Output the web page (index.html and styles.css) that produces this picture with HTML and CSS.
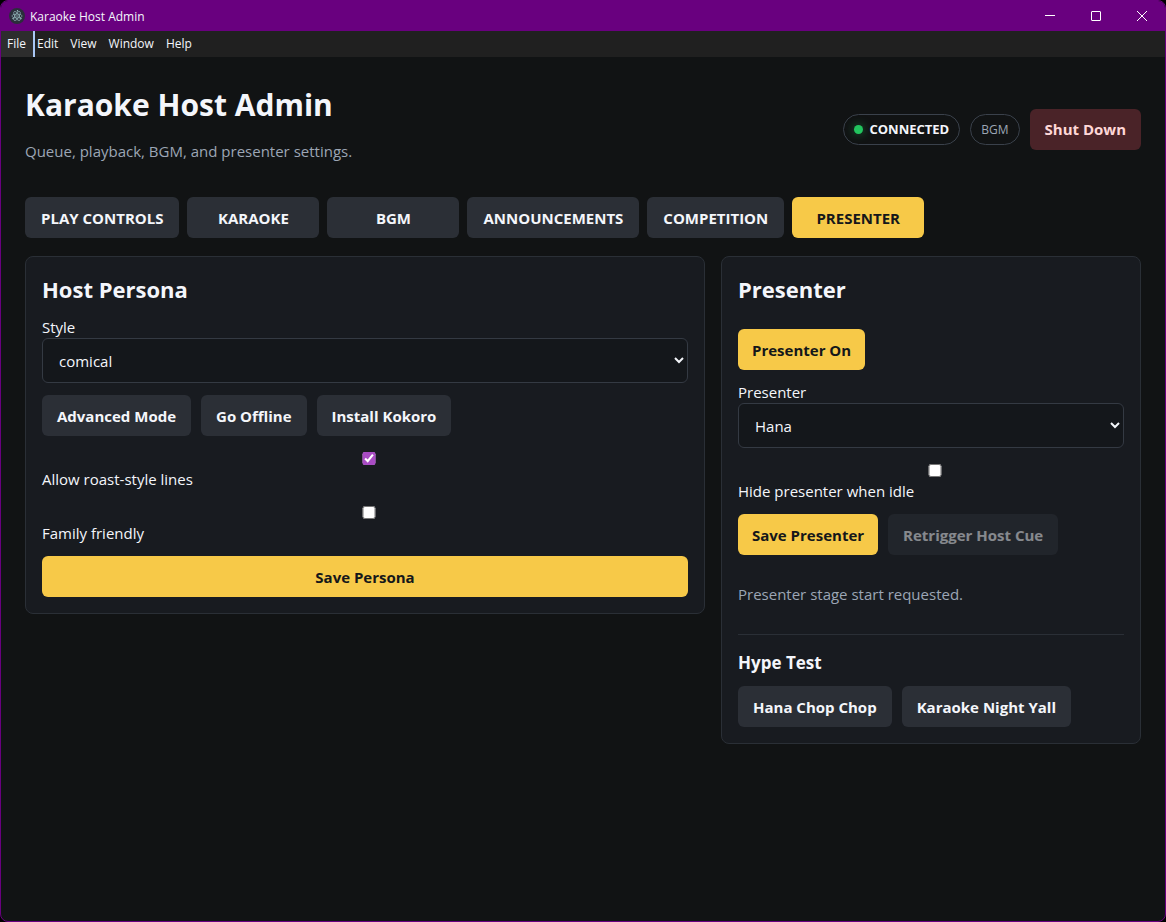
FILE: index.html
```html
<!DOCTYPE html>
<html lang="en">
<head>
    <meta charset="UTF-8">
    <meta name="viewport" content="width=device-width, initial-scale=1.0">
    <title>Karaoke Host Admin</title>
    <link rel="stylesheet" href="styles.css">
</head>
<body>
    <div class="window">
        <div class="titlebar">
            <svg class="app-icon" viewBox="0 0 16 16" width="16" height="16">
                <circle cx="8" cy="8" r="8" fill="#2b2e3b"/>
                <g fill="none" stroke="#9fc4c8" stroke-width="0.6">
                    <ellipse cx="8" cy="8" rx="5.2" ry="2"/>
                    <ellipse cx="8" cy="8" rx="5.2" ry="2" transform="rotate(60 8 8)"/>
                    <ellipse cx="8" cy="8" rx="5.2" ry="2" transform="rotate(120 8 8)"/>
                </g>
                <g fill="#9fc4c8">
                    <circle cx="8" cy="8" r="0.7"/>
                    <circle cx="4" cy="10.5" r="0.7"/>
                    <circle cx="12" cy="10.5" r="0.7"/>
                    <circle cx="8.5" cy="2.8" r="0.7"/>
                </g>
            </svg>
            <span class="app-title">Karaoke Host Admin</span>
            <div class="window-controls">
                <button class="window-button" aria-label="Minimize">
                    <svg viewBox="0 0 10 10" width="10" height="10"><path d="M0 4.5H10" stroke="#fff" fill="none"/></svg>
                </button>
                <button class="window-button" aria-label="Maximize">
                    <svg viewBox="0 0 10 10" width="10" height="10"><rect x="0.5" y="0.5" width="9" height="9" rx="0.5" stroke="#fff" fill="none"/></svg>
                </button>
                <button class="window-button" aria-label="Close">
                    <svg viewBox="0 0 10 10" width="10" height="10"><path d="M0 0L10 10M10 0L0 10" stroke="#fff" fill="none"/></svg>
                </button>
            </div>
        </div>

        <div class="menubar">
            <button class="menu-item active">File</button>
            <button class="menu-item">Edit</button>
            <button class="menu-item">View</button>
            <button class="menu-item">Window</button>
            <button class="menu-item">Help</button>
        </div>

        <main class="content">
            <header class="header">
                <div>
                    <h1>Karaoke Host Admin</h1>
                    <p class="subtitle">Queue, playback, BGM, and presenter settings.</p>
                </div>
                <div class="status">
                    <span class="pill connected"><span class="dot"></span>CONNECTED</span>
                    <span class="pill">BGM</span>
                    <button class="button danger">Shut Down</button>
                </div>
            </header>

            <nav class="tabs">
                <button class="button tab">PLAY CONTROLS</button>
                <button class="button tab">KARAOKE</button>
                <button class="button tab">BGM</button>
                <button class="button tab">ANNOUNCEMENTS</button>
                <button class="button tab">COMPETITION</button>
                <button class="button tab primary">PRESENTER</button>
            </nav>

            <div class="panels">
                <section class="panel">
                    <h2>Host Persona</h2>
                    <label for="style">Style
                        <select id="style">
                            <option>comical</option>
                        </select>
                    </label>
                    <div class="row">
                        <button class="button">Advanced Mode</button>
                        <button class="button">Go Offline</button>
                        <button class="button">Install Kokoro</button>
                    </div>
                    <label for="roast"><input type="checkbox" id="roast" checked>Allow roast-style lines</label>
                    <label for="family"><input type="checkbox" id="family">Family friendly</label>
                    <button class="button primary">Save Persona</button>
                </section>

                <section class="panel">
                    <h2>Presenter</h2>
                    <div class="row toggle-row">
                        <button class="button primary">Presenter On</button>
                    </div>
                    <label for="presenter">Presenter
                        <select id="presenter">
                            <option>Hana</option>
                        </select>
                    </label>
                    <label for="idle"><input type="checkbox" id="idle">Hide presenter when idle</label>
                    <div class="row">
                        <button class="button primary">Save Presenter</button>
                        <button class="button" disabled>Retrigger Host Cue</button>
                    </div>
                    <p class="message">Presenter stage start requested.</p>
                    <div class="hype">
                        <h3>Hype Test</h3>
                        <div class="row">
                            <button class="button">Hana Chop Chop</button>
                            <button class="button">Karaoke Night Yall</button>
                        </div>
                    </div>
                </section>
            </div>
        </main>
    </div>
</body>
</html>
```

FILE: styles.css
```css
* {
    box-sizing: border-box;
}

body {
    margin: 0;
    background: #000;
    color: #f4f6fb;
    font-family: "Segoe UI", "Open Sans", sans-serif;
    font-size: 15px;
    line-height: 21px;
}

button,
select {
    font-family: inherit;
    color: inherit;
}

.window {
    min-height: 100vh;
    border: 1px solid #69007f;
    border-radius: 8px;
    background: #111314;
    overflow: hidden;
}

.titlebar {
    display: flex;
    align-items: center;
    height: 30px;
    padding-left: 8px;
    background: #69007f;
    font-size: 12px;
}

.app-title {
    margin-left: 5px;
}

.window-controls {
    display: flex;
    margin-left: auto;
}

.window-button {
    display: flex;
    align-items: center;
    justify-content: center;
    width: 46px;
    height: 28px;
    padding: 0;
    border: none;
    background: none;
}

.menubar {
    display: flex;
    height: 26px;
    background: #202020;
}

.menu-item {
    padding: 0 6px 2px;
    border: none;
    background: none;
    font-size: 12px;
}

.menu-item.active {
    margin-right: -4px;
    padding-right: 7px;
    border-right: 2px solid #a9c7f5;
    background: #2d2d2d;
}

.content {
    padding: 24px;
}

.header {
    display: flex;
    align-items: center;
    justify-content: space-between;
    margin-bottom: 20px;
}

h1 {
    margin: 0;
    font-size: 30px;
    line-height: 48px;
}

.subtitle {
    margin: 12px 0 16px;
    line-height: 20px;
    color: #9ca6b5;
}

.status {
    display: flex;
    align-items: center;
    gap: 10px;
}

.pill {
    display: flex;
    align-items: center;
    gap: 6px;
    height: 31px;
    padding: 0 10px;
    border: 1px solid #3a414b;
    border-radius: 16px;
    font-size: 12px;
    color: #9ca6b5;
}

.pill.connected {
    font-size: 13px;
    font-weight: bold;
    color: #f4f6fb;
}

.dot {
    width: 9px;
    height: 9px;
    border-radius: 50%;
    background: #22c55e;
    box-shadow: 0 0 10px rgba(34, 197, 94, 0.5);
}

.button {
    height: 41px;
    padding: 0 15px;
    border: none;
    border-radius: 6px;
    background: #2b2f36;
    font-size: 15px;
    font-weight: bold;
    cursor: pointer;
}

.button.primary {
    padding: 0 14px;
    background: #f7c948;
    color: #15171a;
}

.button.danger {
    background: #4a2328;
    color: #ffd7d7;
}

.button:disabled {
    opacity: 0.5;
    cursor: not-allowed;
}

.tabs {
    display: flex;
    flex-wrap: wrap;
    gap: 8px;
    margin-bottom: 18px;
}

.tab {
    min-width: 132px;
    padding: 0 16px;
}

.panels {
    display: grid;
    grid-template-columns: minmax(0, 1fr) 420px;
    align-items: start;
    gap: 16px;
}

.panel {
    display: grid;
    gap: 12px;
    padding: 16px;
    border: 1px solid #2a2f36;
    border-radius: 8px;
    background: #181b20;
}

h2 {
    margin: 0;
    font-size: 22px;
    line-height: 32px;
}

h3 {
    margin: 0;
    font-size: 17px;
    line-height: 23px;
}

label {
    display: block;
}

select {
    display: block;
    width: 100%;
    height: 45px;
    padding: 0 12px;
    border: 1px solid #343a43;
    border-radius: 6px;
    background: #14171b;
    font-size: 15px;
}

input[type="checkbox"] {
    display: block;
    width: 100%;
    height: 13px;
    margin: 4px;
    accent-color: #a94cc4;
}

.row {
    display: flex;
    flex-wrap: wrap;
    gap: 10px;
}

.toggle-row {
    margin-top: 12px;
}

.message {
    margin: 16px 0;
    line-height: 23px;
    color: #9ca6b5;
}

.hype {
    display: grid;
    gap: 12px;
    padding-top: 16px;
    border-top: 1px solid #2a2f36;
}
```
